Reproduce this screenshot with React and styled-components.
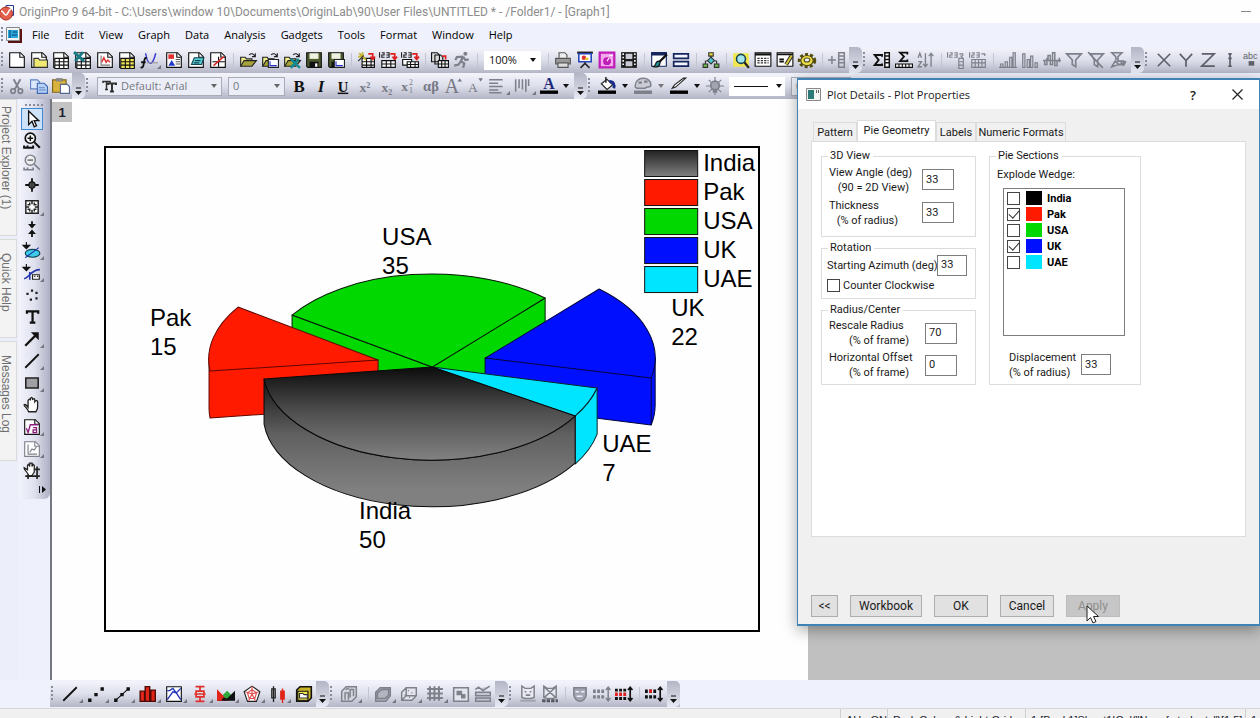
import React from "react";
import styled, { createGlobalStyle, css } from "styled-components";

const uiFont = `"Open Sans", "Noto Sans", sans-serif`;
const dialogFont = `Roboto, "Liberation Sans", Arial, sans-serif`;
const plainFont = `"Liberation Sans", Arial, sans-serif`;

const GlobalStyle = createGlobalStyle`
  * { box-sizing: border-box; }
  body { margin: 0; background: #eef0fb; font-family: ${uiFont}; color: #1c1c2c; overflow: hidden; }
  button, input, select { font: inherit; color: inherit; margin: 0; }
  svg { display: block; flex: none; }
`;

const Shell = styled.div`
  position: relative;
  display: flex;
  flex-direction: column;
  height: 100vh;
  overflow: hidden;
`;

const TitleBar = styled.header`
  display: flex;
  align-items: center;
  flex: none;
  height: 23px;
  gap: 5px;
  background: #fefefe;
  color: #8c8c8c;
`;

const TitleText = styled.h1`
  flex: 1;
  margin: 0;
  font-family: ${dialogFont};
  font-size: 12px;
  line-height: 22px;
  font-weight: 400;
  white-space: nowrap;
`;

const MinimiseButton = styled.button`
  display: flex;
  align-items: center;
  justify-content: center;
  width: 28px;
  height: 22px;
  border: 0;
  padding: 0;
  background: none;
`;

const MenuBar = styled.nav`
  display: flex;
  align-items: center;
  flex: none;
  height: 24px;
  background: #eff1fc;
`;

const MenuList = styled.div`
  display: flex;
  gap: 15px;
  padding-left: 10px;
`;

const MenuItem = styled.button`
  border: 0;
  padding: 0;
  background: none;
  font-size: 11px;
  line-height: 22px;
  color: #000;
`;

const ToolRow = styled.div`
  display: flex;
  flex: none;
  height: 26px;
  white-space: nowrap;
  background: linear-gradient(#edf0fa, #e6e8f4 40%, #b6b8ca 88%, #9a9cae);
  overflow: hidden;
`;

const BottomRow = styled.div`
  display: flex;
  flex: none;
  height: 28px;
  padding: 1px 0 1px 50px;
  background: #eff1fc;
  overflow: hidden;
`;

const Bar = styled.div`
  display: flex;
  align-items: center;
  flex: none;
  background: linear-gradient(#f3f4fb, #dddfeb 50%, #b4b6c7);
`;

const Grip = styled.span`
  flex: none;
  width: ${(p) => (p.$narrow ? 6 : 9)}px;
  height: 16px;
  background: radial-gradient(circle at 1px 1px, #8a8c9c 1px, transparent 1px) 1px 0 / 9px 4px repeat-y;
`;

const VGrip = styled.span`
  flex: none;
  height: 7px;
  width: 20px;
  margin-left: 4px;
  background: radial-gradient(circle at 1px 1px, #8a8c9c 1px, transparent 1px) 0 3px / 4px 8px repeat-x;
`;

const ToolButton = styled.button`
  position: relative;
  display: flex;
  align-items: center;
  flex: none;
  width: ${(p) => p.$w || 22}px;
  height: 22px;
  padding: 0 0 0 2px;
  border: 1px solid transparent;
  border-left-width: 0;
  background: none;
  ${(p) =>
    p.$mark &&
    css`
      &::after {
        content: "";
        position: absolute;
        right: 1px;
        bottom: 1px;
        border: 2px solid #74757f;
        border-top-color: transparent;
        border-left-color: transparent;
      }
    `}
  ${(p) =>
    p.$active &&
    css`
      border: 1px solid #3c8ad8;
      padding-left: 1px;
      background: #cfe3f8;
    `}
`;

const Separator = styled.span`
  flex: none;
  width: 8px;
  height: 18px;
  background: linear-gradient(#c3c5d3, #c3c5d3) 4px 2px / 1px 14px no-repeat;
`;

const Overflow = styled.button`
  display: flex;
  align-items: flex-end;
  justify-content: center;
  flex: none;
  align-self: stretch;
  width: 13px;
  margin-left: ${(p) => p.$gap || 0}px;
  padding: 0 0 4px;
  border: 0;
  border-radius: 0 5px 5px 0;
  background: linear-gradient(#b4b6c6, #d0d2df 60%, #e8eaf5);
`;

const Caret = styled.span`
  flex: none;
  width: 0;
  border: 3px solid transparent;
  border-bottom: 0;
  border-top: 4px solid ${(p) => p.$color || "#111"};
  margin: 0 ${(p) => p.$space || 0}px;
`;

const Combo = styled.button`
  display: flex;
  align-items: center;
  flex: none;
  width: ${(p) => p.$w}px;
  height: 19px;
  margin: 0 3px;
  padding: 0 4px;
  gap: 4px;
  border: 1px solid ${(p) => (p.$dim ? "#a9abb8" : "#fff")};
  background: ${(p) => (p.$dim ? "#eceef7" : "#fff")};
  color: ${(p) => (p.$dim ? "#77787f" : "#111")};
  font-size: 11px;
  line-height: 16px;
`;

const ComboText = styled.span`
  flex: 1;
  text-align: left;
`;

const Workspace = styled.main`
  display: flex;
  flex: 1;
  min-height: 0;
`;

const SideTabs = styled.aside`
  display: flex;
  flex-direction: column;
  gap: 3px;
  flex: none;
  width: 19px;
  background: #eceefa;
`;

const SideTab = styled.button`
  width: 17px;
  height: ${(p) => p.$h}px;
  padding: ${(p) => p.$pad}px 5px 0 0;
  border: 1px solid #dadada;
  border-left: 0;
  background: #f3f3f4;
  color: #6f6f6f;
  font-family: ${plainFont};
  font-size: 12px;
  line-height: 11px;
  writing-mode: vertical-rl;
  text-align: start;
  white-space: nowrap;
`;

const Tools = styled.div`
  display: flex;
  flex-direction: column;
  flex: none;
  align-self: flex-start;
  width: 31px;
  padding: 2px 0 3px 2px;
  border-radius: 0 0 6px 0;
  background: linear-gradient(90deg, #f2f3fb, #dfe1ee 50%, #aeb0c4);
`;

const ToolsEnd = styled.button`
  display: flex;
  justify-content: flex-end;
  align-items: center;
  height: 14px;
  border: 0;
  padding: 0 4px;
  background: none;
`;

const Desktop = styled.section`
  display: flex;
  flex: 1;
  min-width: 0;
  border-left: 2px solid #77787f;
  background: #c0c0c0;
`;

const GraphWindow = styled.div`
  display: flex;
  flex-direction: column;
  width: 62.6%;
  background: #fefefe;
`;

const LayerTag = styled.button`
  width: 20px;
  height: 20px;
  margin-top: 3px;
  border: 0;
  padding: 0;
  background: #c3c3c3;
  font-family: ${plainFont};
  font-size: 13px;
  font-weight: 700;
`;

const Frame = styled.div`
  margin: 24px 48px 0 52px;
  border: 2px solid #000;
  svg { width: 100%; }
`;

const Dialog = styled.section`
  position: absolute;
  top: 78px;
  left: 797px;
  width: 463px;
  display: flex;
  flex-direction: column;
  border: 1px solid #3f82b6;
  border-top-width: 2px;
  border-bottom-width: 2px;
  background: #f0f0f0;
  box-shadow: 0 4px 14px rgba(0, 0, 0, 0.35);
  font-family: ${dialogFont};
  font-size: 11px;
  color: #1a1a1a;
`;

const DialogTitle = styled.header`
  display: flex;
  align-items: center;
  height: 29px;
  padding-left: 8px;
  background: #fff;
  font-family: ${uiFont};
`;

const DialogName = styled.h2`
  flex: 1;
  margin: 0 0 0 6px;
  font-size: 11px;
  font-weight: 400;
`;

const CaptionButton = styled.button`
  display: flex;
  align-items: center;
  justify-content: center;
  width: 44px;
  height: 28px;
  border: 0;
  padding: 0;
  background: none;
  font-size: 13px;
  font-weight: 600;
`;

const TabList = styled.div`
  display: flex;
  align-items: flex-end;
  height: 32px;
  padding-left: 15px;
`;

const Tab = styled.button`
  height: ${(p) => (p.$on ? 22 : 19)}px;
  width: ${(p) => p.$w}px;
  padding: 0 0 ${(p) => (p.$on ? 3 : 0)}px;
  margin-bottom: ${(p) => (p.$on ? -1 : 0)}px;
  border: 1px solid #dcdcdc;
  border-bottom: 0;
  background: ${(p) => (p.$on ? "#fff" : "#f0f0f0")};
  white-space: nowrap;
`;

const TabPage = styled.div`
  display: flex;
  align-items: flex-start;
  gap: 13px;
  height: 396px;
  margin: 0 13px;
  padding: 7px 9px;
  border: 1px solid #dcdcdc;
  background: #fff;
`;

const Column = styled.div`
  display: flex;
  flex-direction: column;
  gap: 4px;
`;

const Group = styled.fieldset`
  width: ${(p) => p.$w}px;
  min-width: 0;
  height: ${(p) => p.$h}px;
  margin: 0;
  padding: 0 0 0 5px;
  border: 1px solid #dcdcdc;
`;

const Legend = styled.legend`
  margin-left: 1px;
  padding: 0 3px 0 2px;
  line-height: 14px;
`;

const Field = styled.label`
  display: flex;
  align-items: center;
  gap: ${(p) => p.$gap ?? 13}px;
  height: ${(p) => p.$h ?? 33}px;
  padding-left: ${(p) => p.$indent ?? 2}px;
  line-height: 15px;
  white-space: nowrap;
`;

const FieldText = styled.span`
  width: ${(p) => p.$w}px;
`;

const Second = styled.span`
  display: block;
  text-align: ${(p) => p.$align || "right"};
  padding-right: ${(p) => p.$inset || 0}px;
`;

const NumberInput = styled.input`
  width: ${(p) => p.$w || 32}px;
  height: 21px;
  padding: 0 0 1px 3px;
  border: 1px solid #7d7d7d;
  border-radius: 0;
  background: #fff;
`;

const CheckBox = styled.input`
  appearance: none;
  flex: none;
  width: 13px;
  height: 13px;
  border: 1px solid #444;
  background: #fff;
  &:checked::before {
    content: "";
    display: block;
    width: 9px;
    height: 5px;
    margin: 1px 0 0 1px;
    border: solid #333;
    border-width: 0 0 1px 1px;
    transform: rotate(-48deg);
  }
`;

const CheckLabel = styled.label`
  display: flex;
  align-items: center;
  gap: 3px;
  height: 13px;
  margin-top: 4px;
  white-space: nowrap;
`;

const ListCaption = styled.div`
  padding: 4px 0 6px 2px;
  line-height: 15px;
`;

const WedgeList = styled.div`
  width: 122px;
  height: 148px;
  margin: 0 0 12px 8px;
  padding: 1px 3px;
  border: 1px solid #7d7d7d;
`;

const WedgeRow = styled.label`
  display: flex;
  align-items: center;
  height: 16px;
  gap: 6px;
  font-weight: 700;
  color: #000;
`;

const Swatch = styled.span`
  width: 16px;
  height: 14px;
  margin-right: -1px;
  background: ${(p) => p.$color};
`;

const DialogButtons = styled.footer`
  display: flex;
  gap: 12px;
  padding: 58px 13px 7px;
`;

const PushButton = styled.button`
  width: ${(p) => p.$w || 54}px;
  height: 22px;
  padding: 0;
  border: 1px solid #adadad;
  background: #e1e1e1;
  font-size: 12px;
  &:disabled { background: #c6c6c6; border-color: #bdbdbd; color: #8e8e8e; }
`;

const Cursor = styled.svg`
  position: absolute;
  left: 288px;
  top: 525px;
`;

const StatusBar = styled.footer`
  display: flex;
  justify-content: flex-end;
  flex: none;
  height: 10px;
  border-top: 1px solid #d7d7d7;
  background: #f0f0f0;
  font-family: ${plainFont};
  font-size: 11px;
  line-height: 14px;
  overflow: hidden;
  white-space: nowrap;
`;

const StatusCell = styled.span`
  flex: none;
  width: ${(p) => p.$w}px;
  height: 20px;
  padding: 4px 0 0 5px;
  border-left: 1px solid #d0d0d0;
  overflow: hidden;
`;

const G = "#7e808a";
const page = "M1.500 1.500h9.500l3.500 3.500v9.500h-13z";
const Page = ({ children, edge = "#111" }) => (
  <>
    <path d={page} fill="#fff" stroke={edge} />
    <path d="M10.500 1.500v4h4" fill="none" stroke={edge} />
    {children}
  </>
);
const Grid = ({ x = 2, y = 6, w = 12, h = 9, fill = "#fff", c = "#111" }) => (
  <path
    d={`M${x}.5 ${y}.5h${w}v${h}h-${w}zM${x}.5 ${y + 3}.5h${w}M${x}.5 ${y + 6}.5h${w}M${x + 4}.5 ${y}.5v${h}M${x + 8}.5 ${y}.5v${h}`}
    fill={fill}
    stroke={c}
  />
);
const Folder = () => (
  <>
    <path d="M1.500 13.500v-8h4l1 1.500h5v2" fill="#f2ee8a" stroke="#222" />
    <path d="M1.500 13.500l3-5h11l-4 5z" fill="#a8a23a" stroke="#222" />
    <path d="M9 3.500c2-2 4-1 5 1M14.500 2v3h-3" fill="none" stroke="#222" />
  </>
);
const Floppy = () => (
  <>
    <path d="M1.500 1.500h13v13h-12l-1-1z" fill="#4c5a2c" stroke="#111" />
    <path d="M4 2h8v5h-8z" fill="#eef0e0" />
    <path d="M4 9.500h8v5h-8z" fill="#111" />
    <path d="M9 11h2v3h-2z" fill="#fff" />
  </>
);
const Digits = ({ c = "#222" }) => (
  <path d="M.500 1v5M2.500 1.500h2v2h-2v2h2.500M6.500 1.500h2.500v4h-2.500M6.500 3.500h2" stroke={c} fill="none" />
);
const RedArrow = ({ c = "#e02020" }) => (
  <path d="M10 2.500h4v4M12 5l2 2.500L16 5" fill="none" stroke={c} strokeWidth="1.500" />
);

const art = {
  newDoc: <Page />,
  newFolder: (
    <Page>
      <path d="M3.500 14.500v-8h4l1 1.500h7v6.500z" fill="#efe873" stroke="#333" />
    </Page>
  ),
  newBook: <Page><Grid /></Page>,
  newExcel: (
    <Page>
      <Grid />
      <path d="M0 1l9 8M8 1L1 9" stroke="#1a7a86" strokeWidth="2.500" />
    </Page>
  ),
  newGraph: (
    <Page>
      <path d="M4.500 4v8.500h8" fill="none" stroke="#777" />
      <path d="M5 10l2-4 2 4 1.500-2 2 2" fill="none" stroke="#d33" strokeWidth="1.300" />
    </Page>
  ),
  newMatrix: <Page><Grid fill="#efe35a" /></Page>,
  newFn: (
    <>
      <path d="M5 2c2 12 6 12 9 0" fill="none" stroke="#3a3ad0" strokeWidth="1.300" />
      <path d="M6 6.500c-2-1-2 1-2.500 4s-1 5-3 4M1 10h4" fill="none" stroke="#111" strokeWidth="1.600" />
      <path d="M6 10.500h10" stroke="#999" />
    </>
  ),
  newLayout: (
    <Page>
      <path d="M3 3h5v4H3z" fill="#e03030" />
      <path d="M3 13l3-5 3 5z" fill="#2038c8" />
      <path d="M9.500 7.500h4M9.500 9.500h4M9.500 11.500h4" stroke="#555" />
    </Page>
  ),
  newNotes: (
    <Page>
      <path d="M4 12l2.500-6H15l-2 6z" fill="#58cfd0" stroke="#145" />
      <path d="M7 8.500h5M6 10.500h5" stroke="#145" />
    </Page>
  ),
  newScript: (
    <Page>
      <path d="M3 9.500h11M8.500 5v9" stroke="#111" />
      <path d="M4 13l9-8" stroke="#e02020" strokeWidth="1.300" />
    </Page>
  ),
  open: <Folder />,
  openTpl: (
    <>
      <Folder />
      <path d="M6.500 7.500h9v7h-9z" fill="#fff" stroke="#222" />
      <path d="M8 9v4h6" fill="none" stroke="#2233cc" />
    </>
  ),
  openXl: (
    <>
      <Folder />
      <path d="M7 7l8 8M14 7l-7 8" stroke="#128a96" strokeWidth="2.200" />
    </>
  ),
  save: <Floppy />,
  saveTpl: (
    <>
      <Floppy />
      <path d="M6.500 7.500h9v7h-9z" fill="#fff" stroke="#222" />
      <path d="M8 9v4h6" fill="none" stroke="#2233cc" />
    </>
  ),
  wizard: (
    <>
      <Grid x={4} y={6} w={11} h={8} />
      <path d="M2 2l6 6M5 1v3M1 5h3" stroke="#c9b42a" strokeWidth="1.600" />
      <path d="M1 9l5-5" stroke="#333" />
      <RedArrow />
    </>
  ),
  ascii: (
    <>
      <Digits />
      <RedArrow />
      <path d="M2.500 8.500h12v6h-12zM2.500 11.500h12M6.500 8.500v6M10.500 8.500v6" fill="#fff" stroke="#111" />
    </>
  ),
  asciiMulti: (
    <>
      <Digits />
      <RedArrow />
      <path d="M1.500 7.500h8v5h-8z" fill="#fff" stroke="#111" />
      <path d="M5.500 9.500h10v5h-10zM5.500 12h10M8.500 9.500v5M12.500 9.500v5" fill="#fff" stroke="#111" />
    </>
  ),
  batch: (
    <>
      <path d="M.500 1.500h5l2 2v6h-7zM3.500 3.500h5l2 2v6h-7z" fill="#ddd" stroke="#111" />
      <path d="M6.500 8.500h9v6h-9zM6.500 11.500h9M9.500 8.500v6M12.500 8.500v6" fill="#fff" stroke="#111" />
      <path d="M10 4.500h3v3" fill="none" stroke="#e02020" strokeWidth="1.500" />
    </>
  ),
  runner: (
    <>
      <circle cx="11" cy="2.500" r="1.800" fill={G} />
      <path d="M9 5L3.500 5.500 2 8M9 5l2 3 3-.500M9 5L7 9l3 2-1 4M7 9l-2 3-4 1" fill="none" stroke={G} strokeWidth="2" />
    </>
  ),
  print: (
    <>
      <path d="M4.500 6V1.500h5l2 2V6" fill="#eee" stroke="#555" />
      <path d="M1.500 6.500h13v5h-13z" fill="#999" stroke="#555" />
      <path d="M3.500 10.500h9v4h-9z" fill="#ddd" stroke="#555" />
    </>
  ),
  slides: (
    <>
      <path d="M1 1.500h14" stroke="#222" strokeWidth="2" />
      <path d="M2.500 2.500h11v7h-11z" fill="#fff" stroke="#24b" strokeWidth="1.400" />
      <circle cx="7" cy="6" r="2" fill="#d33" />
      <path d="M8 6h3v2H8z" fill="#e8c030" />
      <path d="M8 10v2M4 15l4-4 4 4" fill="none" stroke="#222" strokeWidth="1.300" />
    </>
  ),
  pinkBox: (
    <>
      <path d="M1.500 1.500h13v13h-13z" fill="#f3a8ee" stroke="#c01cb8" strokeWidth="2" />
      <circle cx="8" cy="9" r="3.500" fill="#c01cb8" />
      <path d="M8 9l2-3M10 4h3" stroke="#fff" />
    </>
  ),
  film: (
    <>
      <path d="M1 1h14v14H1z" fill="#1b1b1b" />
      <path d="M5 2.500h6v4.500H5zM5 9h6v4.500H5z" fill="#c9ccd6" />
      <path d="M2.800 2v12M13.200 2v12" stroke="#fff" strokeWidth="1.400" strokeDasharray="1.500 1.500" />
    </>
  ),
  brushWin: (
    <>
      <path d="M1.500 1.500h13v12h-13z" fill="#fff" stroke="#14245c" />
      <path d="M1 2.500h14" stroke="#14245c" strokeWidth="3" />
      <path d="M15 3l-7 7" stroke="#111" strokeWidth="2" />
      <path d="M8 9c-4 0-2 4-5 5 4 1 6-1 6-4z" fill="#1c8c96" stroke="#111" />
    </>
  ),
  panes: <path d="M1.500 2.500h13v4h-13zM1.500 9.500h13v4h-13z" fill="#f2f4ff" stroke="#14245c" strokeWidth="1.500" />,
  tree: (
    <>
      <path d="M8 4v4M3 12V9l5-1 5 1v3" stroke="#333" fill="none" />
      <path d="M6 1.500h4v3H6z" fill="#e8d83a" stroke="#333" />
      <path d="M8 5.500l3 3-3 3-3-3z" fill="#4cc7d6" stroke="#333" />
      <path d="M1 11.500h4v3H1zM11 11.500h4v3h-4z" fill="#6ac04a" stroke="#333" />
    </>
  ),
  finder: (
    <>
      <path d="M1 2h14v12H1z" fill="#f1e650" />
      <circle cx="8" cy="7" r="4" fill="#a5e6ee" stroke="#145" strokeWidth="1.400" />
      <path d="M11 10l4 5" stroke="#222" strokeWidth="2" />
    </>
  ),
  results: (
    <>
      <path d="M1 1.500h14v12H1z" fill="#fff" stroke="#111" />
      <path d="M1 3h14" stroke="#111" strokeWidth="2" />
      <path d="M3 6.500h10M3 8.500h10M3 10.500h10" stroke="#333" strokeDasharray="2 1" />
    </>
  ),
  command: (
    <>
      <path d="M1 1.500h14v12H1z" fill="#fff" stroke="#111" />
      <path d="M1 3h14M3 7.500h4M3 9.500h4" stroke="#111" strokeWidth="1.500" />
      <path d="M14 4l-5 8" stroke="#222" strokeWidth="3.500" />
      <path d="M14 4l-5 8" stroke="#d6c83c" strokeWidth="1.800" />
    </>
  ),
  gear: (
    <>
      <ellipse cx="8" cy="8.500" rx="6.500" ry="5" fill="none" stroke="#554c10" strokeWidth="3.500" strokeDasharray="2.500 1.700" />
      <ellipse cx="8" cy="8.500" rx="5.500" ry="4.500" fill="#ecdf4a" stroke="#554c10" />
      <ellipse cx="8" cy="8" rx="2.500" ry="1.800" fill="#eef" stroke="#554c10" />
    </>
  ),
  addCol: <path d="M0 8h7M3.500 4.500v7M9.500 1.500h5v13h-5zM9.500 4.500h5M9.500 7.500h5M9.500 10.500h5" fill="none" stroke={G} strokeWidth="1.300" />,
  sumCol: (
    <>
      <path d="M8 5V3.500H1.500L5 8l-3.500 4.500H8V11" fill="none" stroke="#111" strokeWidth="1.700" />
      <path d="M10.500 1.500h4v13h-4zM10.500 4.500h4M10.500 7.500h4M10.500 10.500h4" fill="#fff" stroke="#111" strokeWidth="1.300" />
    </>
  ),
  sumRow: (
    <>
      <path d="M11 3V1.500H4.500L8 5l-3.500 4H11V7.500" fill="none" stroke="#111" strokeWidth="1.600" />
      <path d="M.5 11.500h15v3H.5zM3.500 11.500v3M6.500 11.500v3M9.500 11.500v3M12.500 11.500v3" fill="#fff" stroke="#111" />
    </>
  ),
  sort: <path d="M1 6l1.500-4L4 6M1 9.500h3L1 14h3.500M7.500 2v12M5.500 11.500l2 2.500 2-2.500M12.500 14V2M10.500 4.500l2-2.500 2 2.500" fill="none" stroke={G} strokeWidth="1.200" />,
  setCol: (
    <>
      <Digits c={G} />
      <path d="M11 2.500h3v2M12 4l2 2" stroke={G} fill="none" />
      <path d="M10.500 6.500h4v9h-4zM10.500 9.500h4M10.500 12.500h4" fill="none" stroke={G} />
    </>
  ),
  setRow: (
    <>
      <Digits c={G} />
      <path d="M11 2.500h3v2" stroke={G} fill="none" />
      <path d="M2.500 7.500h12v7h-12zM2.500 10.500h12M5.500 7.500v7M8.500 7.500v7M11.500 7.500v7" fill="none" stroke={G} />
    </>
  ),
  barsUp: <path d="M1.500 14.500v-3h2v3zM5.500 14.500v-5h2v5zM9.500 14.500v-9h2v9zM12.500 14.500v-13h2v13zM0 14.500h16" fill="#ccd" stroke={G} />,
  barsMix: <path d="M1.500 14.500v-12h2v12zM5.500 14.500v-7h2v7zM8.500 14.500v-10h2v10zM12.500 14.500v-4h2v4z" fill="#ccd" stroke={G} />,
  barsAxis: <path d="M0 8.500h16M1.500 8v4h2V6M4.500 8V4h2v8h2V1.500h2V13h2V8M14.500 6v4" fill="none" stroke={G} strokeWidth="1.300" />,
  funnel: <path d="M1.500 2.500h13L9.500 8v6l-3-2V8z" fill="#dde" stroke={G} strokeWidth="1.500" />,
  funnelOff: <path d="M3.500 2.500h11L9.500 8v6l-3-2V8zM1 1l13 14" fill="#dde" stroke={G} strokeWidth="1.500" />,
  funnelRe: (
    <>
      <path d="M2.500 1.500h9L8 5v3L6 7V5zM2.500 14l3-5 3 3z" fill="#dde" stroke={G} strokeWidth="1.400" />
      <path d="M7 9h6v3M15 9l-2 3.500L10.500 10M8 12h4" fill="none" stroke={G} strokeWidth="1.600" />
    </>
  ),
  axX: <path d="M2.500 2.500l11 11M13.500 2.500l-11 11" stroke="#5d5f69" strokeWidth="1.400" />,
  axY: <path d="M2.500 2.500L8 8.500l5.500-6M8 8v6" fill="none" stroke="#5d5f69" strokeWidth="1.500" />,
  axZ: <path d="M2.500 2.500h11l-11 11h11.500" fill="none" stroke="#5d5f69" strokeWidth="1.500" />,
  axErr: <path d="M8 3v10M6.500 2.500h3M6.500 13.500h3M6.500 6.500h3" fill="none" stroke="#5d5f69" strokeWidth="1.500" />,
  axLbl: (
    <>
      <text x="0" y="7" fontSize="8" fill="#5d5f69" fontFamily="Liberation Sans, sans-serif">abc</text>
      <path d="M5 9h5v4H5z" fill="#5d5f69" />
    </>
  ),
  cut: (
    <>
      <path d="M5 2l5 9M11 2L6 11" stroke={G} strokeWidth="1.700" />
      <circle cx="4.500" cy="12.500" r="2" fill="none" stroke={G} strokeWidth="1.500" />
      <circle cx="11" cy="12.500" r="2" fill="none" stroke={G} strokeWidth="1.500" />
    </>
  ),
  copy: (
    <>
      <path d="M.500 2.500h6l2 2v6h-8z" fill="#dbe8fb" stroke="#5f83c4" />
      <path d="M6.500 5.500h6l3 3v6h-9z" fill="#b5d0f5" stroke="#3f68b4" />
      <path d="M8 9.500h5M8 11.500h6" stroke="#5f83c4" />
    </>
  ),
  paste: (
    <>
      <path d="M.500 2.500h12v11h-12z" fill="#d9b23c" stroke="#7d6420" />
      <path d="M3.500 1h6v3h-6z" fill="#888" />
      <path d="M7.500 6.500h6l2 2v6h-8z" fill="#fff" stroke="#56698c" />
    </>
  ),
  alignL: <path d="M1 2.500h12M1 5.500h8M1 8.500h12M1 11.500h8M1 14h11" stroke={G} strokeWidth="1.300" />,
  pattern: <path d="M1.500 2v11M4.500 2v8M7.500 2v9M10.500 2v11M13 2v6" stroke={G} strokeWidth="1.400" />,
  bucket: (
    <>
      <path d="M3 6l5-4 5 5-5 4z" fill="#fff" stroke="#222" />
      <path d="M7 0v5" fill="none" stroke="#222" strokeWidth="1.300" />
      <path d="M10 4c4 0 5 3 4 6" fill="none" stroke="#1a2c8c" strokeWidth="2.500" />
      <path d="M0 12h16v3H0z" fill="#000" />
    </>
  ),
  palette: (
    <>
      <path d="M1 8c0-9 14-9 14-1 0 3-4 1-5 3H4C2 10 1 9 1 8z" fill="#c9cad4" stroke={G} strokeWidth="1.300" />
      <path d="M4 4h3v2H4zM9 3h3v2H9zM0 12h16v3H0z" fill={G} />
    </>
  ),
  pen: (
    <>
      <path d="M2 10l3-1 9-8-2 0-8 6z" fill="#fff" stroke="#222" />
      <path d="M0 12h16v3H0z" fill="#000" />
    </>
  ),
  bulb: (
    <>
      <path d="M8 0v16M0 8h16M2.500 2.500l11 11M13.500 2.500l-11 11" stroke={G} />
      <circle cx="8" cy="7.500" r="3.800" fill="#a3a5b0" stroke={G} strokeWidth="1.500" />
      <path d="M6 11h4v3H6z" fill={G} />
    </>
  ),
  pointer: <path d="M5 1v12l3-3 2 5 2-1-2-4.500h4z" fill="#fff" stroke="#111" strokeWidth="1.200" />,
  zoomIn: (
    <>
      <circle cx="6.500" cy="5.500" r="4.500" fill="#fff" stroke="#111" strokeWidth="1.500" />
      <path d="M4 5.500h5M6.500 3v5" stroke="#111" strokeWidth="1.400" />
      <path d="M10 9l5 5M1 12v2h8v-2M4 12v2" fill="none" stroke="#111" strokeWidth="1.800" />
    </>
  ),
  zoomOut: (
    <>
      <circle cx="6.500" cy="5.500" r="4.500" fill="#eee" stroke={G} strokeWidth="1.300" />
      <path d="M4 5.500h5M10 9l5 5M1 12v2h8v-2M4 12v2" fill="none" stroke={G} strokeWidth="1.500" />
    </>
  ),
  reader: (
    <>
      <path d="M8 2v12M2 8h12" stroke="#111" strokeWidth="1.600" />
      <circle cx="8" cy="8" r="2.800" fill="#444" stroke="#111" />
    </>
  ),
  target: <path d="M2.500 2.500h11v11h-11zM8 2.500v3M8 10.500v3M2.500 8h3M10.500 8h3M6 4v2H4M10 4v2h2M6 12v-2H4M10 12v-2h2" fill="#fff" stroke="#222" strokeWidth="1.300" />,
  compress: (
    <>
      <path d="M8 1v3M8 12v3" stroke="#111" strokeWidth="1.600" />
      <path d="M4.500 3.500h7L8 7.500zM4.500 12.500h7L8 8.500z" fill="#111" />
    </>
  ),
  region: (
    <>
      <path d="M3 0v4M0 3h6L3 6z" stroke="#111" fill="#111" />
      <ellipse cx="8.500" cy="10" rx="6.500" ry="3.500" fill="#3ccbe8" stroke="#145" />
      <path d="M2 14L14 5" stroke="#2233aa" />
    </>
  ),
  maskTool: (
    <>
      <path d="M3 0v4M0 3h6L3 6z" stroke="#111" fill="#111" />
      <path d="M1 13c4 0 6-8 14-8M6 14V7" stroke="#2233aa" fill="none" strokeWidth="1.400" />
      <path d="M8.500 9.500h6v4h-6z" fill="#fff" stroke="#222" />
      <path d="M10 11h1M12.500 11h1" stroke="#111" />
    </>
  ),
  dots: <path d="M3 6h2v2H3zM7 3h2v2H7zM6 11h2v2H6zM11 5h2v2h-2zM11 10h2v2h-2z" fill="#222" />,
  text: <path d="M3.500 5V3h10v2M8.500 3v10M6 13h5" fill="none" stroke="#111" strokeWidth="2" />,
  arrow: (
    <>
      <path d="M2 14L11 5" stroke="#111" strokeWidth="2" />
      <path d="M14 2v7L7 2z" fill="#111" />
    </>
  ),
  line: <path d="M2 14L14 2" stroke="#111" strokeWidth="1.600" />,
  rect: <path d="M2.500 3.500h11v9h-11z" fill="#a0a0a4" stroke="#222" strokeWidth="1.400" />,
  hand: <path d="M5 14c-1-3-3-4-4-6 1-1 2 0 3.500 2V4c1-2 2-1 2 0V2.500c1-2 2-1 2 0v1c1-2 2-1 2 0v1.500c1-1.500 2.500-1 2.500 0V9.500c0 3-1 3-1.500 4.500z" fill="#fff" stroke="#222" strokeWidth="1.200" />,
  equation: (
    <Page>
      <path d="M3 9l1.500 4 2-7h7M9 8.500h3v4.500H9V10.500h3" fill="none" stroke="#8c1c7c" strokeWidth="1.200" />
    </Page>
  ),
  graphPage: (
    <Page edge={G}>
      <path d="M4.500 4v8.500h8M6 11l2-3 2 1 2-3" fill="none" stroke={G} />
    </Page>
  ),
  handGrid: (
    <>
      <path d="M4 10c-2-3-3-3-3-5l3 2V3l1-1 1 2V1h2v3l1-2 1 1v6l-2 3H5z" fill="#fff" stroke="#222" strokeWidth="1.100" />
      <path d="M2 12.500h13M12.500 4v11M4.500 11v4M10 6.500h5" stroke="#222" strokeWidth="1.500" />
    </>
  ),
  scatter: <path d="M1 12h3v3H1zM6.500 7h3v3h-3zM12 2h3v3h-3z" fill="#111" />,
  lineSym: (
    <>
      <path d="M3 13L14 3" stroke="#111" />
      <path d="M1 12h3v3H1zM6.500 7h3v3h-3zM12 2h3v3h-3z" fill="#111" />
    </>
  ),
  column: <path d="M1 14.500v-9h4v9zM5.500 14.500v-13h4v13zM10.500 14.500v-10h4v10z" fill="#e02418" stroke="#4c0a06" strokeWidth="1.200" />,
  multiLine: (
    <>
      <path d="M1.500 1.500h13v13h-13z" fill="#fff" stroke="#111" />
      <path d="M2 5h2l3-2 3 4 4-4M2 13l5-7 3 1 4 6" fill="none" stroke="#2233bb" strokeWidth="1.200" />
    </>
  ),
  box: <path d="M4 1.500h8M8 1.500v4M4.500 5.500h7v5h-7zM3 8h10M8 10.500v4M4 14.500h8" fill="none" stroke="#e0302c" strokeWidth="1.500" />,
  area: (
    <>
      <path d="M0 14V4l5 5 6 5z" fill="#e02418" />
      <path d="M5 9l4-4 4 4-4 4z" fill="#2fa83a" />
      <path d="M0 14l6-3 3 1 7-7v9z" fill="#111" />
      <path d="M0 4l6 6-2 4H0z" fill="#e02418" />
    </>
  ),
  radar: (
    <>
      <path d="M8 1l7 5-3 8.500H4L1 6z" fill="#fff" stroke="#222" />
      <path d="M8 4l4 3-1.500 5h-5L4 7zM8 1v7l6-2M8 8l-6-2M8 8l3 6M8 8l-3 6" fill="none" stroke="#e05050" />
    </>
  ),
  candle: (
    <>
      <path d="M4 1v14M2.500 3.500h3v8h-3z" fill="#fff" stroke="#222" strokeWidth="1.200" />
      <path d="M12 3v13M10.500 5.500h3v7h-3z" fill="#e02418" stroke="#e02418" strokeWidth="1.200" />
    </>
  ),
  templates: (
    <>
      <path d="M4.500 1.500h10v10l-3 3h-10v-10z" fill="#c9b42a" stroke="#111" strokeWidth="1.400" />
      <path d="M2.500 5.500h9v8h-9z" fill="#f1e650" stroke="#111" />
      <path d="M4 7.500h3l1 1h3v3H4z" fill="#fff" stroke="#333" />
    </>
  ),
  cubeBars: <path d="M1.500 5.500l4-4h9v9l-4 4h-9zM4.500 13V7h3v6M9 11V4h3v6M5 4l3-1" fill="#d5d6e0" stroke={G} strokeWidth="1.300" />,
  cube: <path d="M1.500 6.500l4-4h9v7l-4 5h-9zM3 7l4-3h6v5l-3 3H3z" fill="#b2b4c0" stroke={G} strokeWidth="1.300" />,
  cubeDots: <path d="M1.500 6.500l4-4h9v7l-4 4h-9zM5.500 2.500v7l-4 4M5.500 9.500h9M7 5h1M10 7h1M4 9h1M8 11h1" fill="#e3e4ee" stroke={G} strokeWidth="1.300" />,
  mesh: <path d="M1 3.500h14M1 7.500h14M1 11.500h14M3.500 1v13M7.500 1v13M11.500 1v13" stroke={G} strokeWidth="1.800" />,
  contour: (
    <>
      <path d="M1.500 2.500h13v12h-13z" fill="#e3e4ee" stroke={G} strokeWidth="1.400" />
      <path d="M4 5h5v4H4zM8 8h4v4H8z" fill={G} />
    </>
  ),
  stack: <path d="M1 4l3-2 4 3 6-4M1.500 6.500h13v3h-13zM1.500 11.500h13v3h-13z" fill="#c2c4d0" stroke={G} strokeWidth="1.300" />,
  cat: (
    <>
      <path d="M2.500 11V1l3 2h5l3-2v10l-3 1h-5z" fill="#e8e9f2" stroke={G} strokeWidth="1.300" />
      <path d="M5 6h1.500M9.500 6H11M6 9h4" stroke={G} strokeWidth="1.500" />
      <path d="M1 14h14" stroke="#a5a6b0" strokeWidth="2" />
    </>
  ),
  catX: (
    <>
      <path d="M2.500 11V1l3 2h5l3-2v10l-3 1h-5zM3 2l10 9M13 2L3 11" fill="#e8e9f2" stroke={G} strokeWidth="1.300" />
      <path d="M1 14h14" stroke="#55565f" strokeWidth="2.500" strokeDasharray="3 1" />
    </>
  ),
  mask: (
    <>
      <path d="M2.500 2.500h11v6c0 3-3 6-5.500 6s-5.500-3-5.500-6z" fill="#a3a5b0" stroke={G} strokeWidth="1.300" />
      <path d="M4 6h3M9 6h3M5 10h5" stroke="#eef" strokeWidth="1.400" />
    </>
  ),
  swapG: (
    <>
      <path d="M0 5.500h10M0 10.500h10" stroke={G} strokeWidth="3" strokeDasharray="2.500 1.200" />
      <path d="M13.500 2v12M11.500 4.500l2-2.500 2 2.500M11.500 11.500l2 2.500 2-2.500" fill="none" stroke={G} strokeWidth="1.300" />
    </>
  ),
  swapR: (
    <>
      <path d="M0 4.500h10M0 12h10" stroke="#111" strokeWidth="2.500" strokeDasharray="2.500 1.200" />
      <path d="M0 8.200h10" stroke="#e02020" strokeWidth="3" strokeDasharray="2.500 1.200" />
      <path d="M13.500 2v12M11.500 4.500l2-2.500 2 2.500M11.500 11.500l2 2.500 2-2.500" fill="none" stroke="#111" strokeWidth="1.500" />
    </>
  ),
  swapK: (
    <>
      <path d="M0 5.500h10M0 10.500h10" stroke="#111" strokeWidth="3" strokeDasharray="2.500 1.200" />
      <path d="M3.700 4h2.500v3H3.700z" fill="#e02020" />
      <path d="M13.500 2v12M11.500 4.500l2-2.500 2 2.500M11.500 11.500l2 2.500 2-2.500" fill="none" stroke="#111" strokeWidth="1.500" />
    </>
  ),
};

const serifGlyph = (body, props = {}) => (
  <text x="8" y="13" textAnchor="middle" fontFamily="Liberation Serif, serif" fontSize="14" fill="#777984" {...props}>
    {body}
  </text>
);
Object.assign(art, {
  bold: serifGlyph("B", { fontWeight: 700, fontSize: 15, fill: "#111" }),
  italic: serifGlyph("I", { fontWeight: 700, fontStyle: "italic", fontSize: 15, fill: "#111" }),
  underline: serifGlyph("U", { fontWeight: 700, textDecoration: "underline", fontSize: 13, fill: "#111" }),
  sup: serifGlyph("x²", { fontSize: 12, fontWeight: 700 }),
  sub: serifGlyph("x₂", { fontSize: 12, fontWeight: 700 }),
  supsub: (
    <>
      <text x="1" y="12" fontFamily="Liberation Serif, serif" fontSize="12" fontWeight="700" fill="#777984">x</text>
      <text x="8" y="7" fontFamily="Liberation Serif, serif" fontSize="7" fill="#777984">2</text>
      <text x="8" y="14" fontFamily="Liberation Serif, serif" fontSize="7" fill="#777984">1</text>
    </>
  ),
  greek: serifGlyph("αβ", { y: 12, fontWeight: 700, fontSize: 13 }),
  bigger: (
    <>
      {serifGlyph("A", { x: 7, y: 14, fontSize: 18 })}
      <path d="M12 4l2-3 2 3z" fill="#777984" />
    </>
  ),
  smaller: (
    <>
      {serifGlyph("A", { x: 6, fontSize: 12 })}
      <path d="M11 1h4l-2 3z" fill="#777984" />
    </>
  ),
  fontColor: (
    <>
      {serifGlyph("A", { y: 11, fontSize: 14, fontWeight: 700, fill: "#1c2a7c" })}
      <path d="M0 12h16v3H0z" fill="#000" />
    </>
  ),
});

const Icon = ({ name }) => (
  <svg width="18" height="18" viewBox="0 0 16 16" overflow="visible" aria-hidden="true">
    {art[name]}
  </svg>
);

/* Toolbar entries: a name, "|" for a separator, a trailing "+" for a fly-out mark. */
const Items = ({ list, markWidth = 25 }) =>
  list.split(" ").map((entry, i) => {
    if (entry === "|") return <Separator key={i} />;
    const mark = entry.endsWith("+");
    const name = mark ? entry.slice(0, -1) : entry;
    return (
      <ToolButton key={i} aria-label={name} $mark={mark} $w={mark ? markWidth : 22}>
        <Icon name={name} />
      </ToolButton>
    );
  });

const More = ({ gap }) => (
  <Overflow aria-label="More buttons" $gap={gap}>
    <svg width="7" height="8" viewBox="0 0 7 8" aria-hidden="true">
      <path d="M1 1h5" stroke="#111" />
      <path d="M0 4h7L3.500 8z" fill="#111" />
    </svg>
  </Overflow>
);

const wedges = [
  { name: "India", color: "#000000", on: false },
  { name: "Pak", color: "#ff1a00", on: true },
  { name: "USA", color: "#00d800", on: false },
  { name: "UK", color: "#0010ff", on: true },
  { name: "UAE", color: "#00e5ff", on: false },
];

const labels = [
  ["USA", "35", 382, 245],
  ["Pak", "15", 150, 326],
  ["UK", "22", 671, 316],
  ["UAE", "7", 602, 452],
  ["India", "50", 359, 519],
];

const PieChart = () => (
  <svg viewBox="106 148 652 482" role="img" aria-label="3D pie chart">
    <defs>
      <linearGradient id="top" gradientUnits="userSpaceOnUse" x1="0" y1="367" x2="0" y2="459">
        <stop offset="0" stopColor="#0c0c0c" />
        <stop offset="0.500" stopColor="#505050" />
        <stop offset="1" stopColor="#808080" />
      </linearGradient>
      <linearGradient id="side" gradientUnits="userSpaceOnUse" x1="0" y1="379" x2="0" y2="490">
        <stop offset="0" stopColor="#151515" />
        <stop offset="0.500" stopColor="#606060" />
        <stop offset="1" stopColor="#808080" />
      </linearGradient>
      <linearGradient id="key" x1="0" y1="0" x2="0" y2="1">
        <stop offset="0" stopColor="#222" />
        <stop offset="1" stopColor="#808080" />
      </linearGradient>
    </defs>
    <g stroke="#061806" strokeLinejoin="round">
      <path d="M292 315V361L432 413L545 344V298L432 367z" fill="#00d800" />
      <path d="M432 367L292 315A168.500 93 0 0 1 545 298z" fill="#00d800" />
    </g>
    <g stroke="#5c0800" strokeLinejoin="round">
      <path d="M209 358V406A168.500 92.500 0 0 0 210 418L378 406V360z" fill="#ff1a00" />
      <path d="M378 360L238 307A168.500 92.500 0 0 0 210 371z" fill="#ff1a00" />
    </g>
    <g stroke="#00043c" strokeLinejoin="round">
      <path d="M485 358V404L651 425A168.500 92.500 0 0 0 655 404V358z" fill="#0010ff" />
      <path d="M485 358L599 289A168.500 92.500 0 0 1 651 378z" fill="#0010ff" />
      <path d="M651 378V425" />
    </g>
    <g stroke="#0a2428" strokeLinejoin="round">
      <path d="M432 367L597 388A168.500 93 0 0 1 575 416z" fill="#00e5ff" />
      <path d="M597 388V434A168.500 93 0 0 1 575 464V416A168.500 93 0 0 0 597 388z" fill="#00e5ff" />
    </g>
    <g stroke="#0a0a0a" strokeLinejoin="round">
      <path d="M264 379V424A168.500 92 0 0 0 575 463V416A168.500 92 0 0 1 264 379z" fill="url(#side)" />
      <path d="M432 367L264 379A168.500 92 0 0 0 575 416z" fill="url(#top)" />
    </g>
    <g fontFamily="Liberation Sans, Arial, sans-serif" fontSize="24" fill="#000">
      {labels.map(([name, value, x, y]) => (
        <React.Fragment key={name}>
          <text x={x} y={y}>{name}</text>
          <text x={x} y={y + 29}>{value}</text>
        </React.Fragment>
      ))}
      {wedges.map((w, i) => (
        <React.Fragment key={w.name}>
          <rect x="644.500" y={150.5 + i * 29} width="53" height="26" fill={i ? w.color : "url(#key)"} stroke="#111" />
          <text x="703" y={171 + i * 29}>{w.name}</text>
        </React.Fragment>
      ))}
    </g>
  </svg>
);

const TwoLineField = ({ first, second, value, textWidth, inset, align, gap, inputWidth, indent, h }) => (
  <Field $gap={gap} $indent={indent} $h={h}>
    <FieldText $w={textWidth}>
      {first}
      <Second $inset={inset} $align={align}>{second}</Second>
    </FieldText>
    <NumberInput $w={inputWidth} defaultValue={value} />
  </Field>
);

const menus = ["File", "Edit", "View", "Graph", "Data", "Analysis", "Gadgets", "Tools", "Format", "Window", "Help"];
const drawTools = "zoomIn zoomOut reader target+ compress region+ maskTool+ dots text arrow+ line+ rect+ hand equation+ graphPage+ handGrid";

export default function App() {
  return (
    <Shell>
      <GlobalStyle />
      <TitleBar>
        <svg width="14" height="20" viewBox="0 0 14 20" aria-hidden="true">
          <path d="M6 3.500h7.500v10H6z" fill="#fff" stroke="#2a3a8c" />
          <circle cx="6" cy="11.500" r="6.500" fill="#e2604c" stroke="#a83020" />
          <path d="M1 9c3 0 3 4 5 4s2-5 5-6" fill="none" stroke="#fff" strokeWidth="1.500" />
        </svg>
        <TitleText>OriginPro 9 64-bit - C:\Users\window 10\Documents\OriginLab\90\User Files\UNTITLED * - /Folder1/ - [Graph1]</TitleText>
        <MinimiseButton aria-label="Minimise">
          <svg width="10" height="6" aria-hidden="true"><path d="M0 2.500h10" stroke="#888" /></svg>
        </MinimiseButton>
      </TitleBar>
      <MenuBar>
        <Grip $narrow />
        <svg width="16" height="16" viewBox="0 0 16 16" aria-hidden="true">
          <path d="M2 2h14v14H2z" fill="#5a1414" />
          <path d="M.5.500h13v13H.5z" fill="#f4f4f4" stroke="#888" />
          <path d="M2 3h10v8H2z" fill="#26a9d6" />
          <path d="M4 3v8M7 5h4M6 8h5" stroke="#123a7c" />
        </svg>
        <MenuList>
          {menus.map((m) => <MenuItem key={m}>{m}</MenuItem>)}
        </MenuList>
      </MenuBar>
      <ToolRow>
        <Bar>
          <Grip $narrow />
          <Items list="newDoc newFolder newBook newExcel newGraph newMatrix newFn+ newLayout newNotes newScript | open openTpl openXl save saveTpl | wizard ascii asciiMulti | batch runner |" />
          <Combo $w={57} aria-label="Zoom">
            <ComboText>100%</ComboText>
            <Caret />
          </Combo>
          <Items list="| print slides pinkBox film | brushWin panes | tree | finder results command gear | addCol" />
          <More gap={1} />
        </Bar>
        <Bar>
          <Grip />
          <Items list="sumCol sumRow sort | setCol setRow | barsUp barsMix barsAxis funnel funnelOff funnelRe" />
          <More gap={2} />
        </Bar>
        <Bar>
          <Grip />
          <Items list="axX axY axZ axErr axLbl" />
        </Bar>
      </ToolRow>
      <ToolRow>
        <Bar>
          <Grip $narrow />
          <Items list="cut copy paste" />
          <More />
        </Bar>
        <Bar>
          <Grip />
          <Combo $w={125} $dim aria-label="Font">
            <svg width="15" height="14" viewBox="0 0 15 14" aria-hidden="true">
              <path d="M1 4V2.500h7V4M4.500 2.500v8M3 10.500h3" fill="none" stroke="#333" strokeWidth="1.500" />
              <path d="M6 6V4.500h8V6M10 4.500v8M8 12.500h4" fill="none" stroke="#333" strokeWidth="2" />
            </svg>
            <ComboText>Default: Arial</ComboText>
            <Caret $color="#666" />
          </Combo>
          <Combo $w={57} $dim aria-label="Font size">
            <ComboText>0</ComboText>
            <Caret $color="#666" />
          </Combo>
          <Items markWidth={26} list="bold italic underline sup sub supsub greek bigger smaller alignL+ pattern+ fontColor" />
          <Caret $space={3} />
          <More gap={2} />
        </Bar>
        <Bar>
          <Grip />
          <Items list="bucket" />
          <Caret $space={4} />
          <Items list="palette" />
          <Caret $space={4} $color="#777" />
          <Items list="pen" />
          <Caret $space={4} />
          <Items list="bulb" />
          <Combo $w={56} aria-label="Line style">
            <svg width="34" height="4" aria-hidden="true"><path d="M0 2.500h34" stroke="#111" /></svg>
            <Caret $space={4} />
          </Combo>
          <Combo $w={60} $dim aria-label="Line width">
            <ComboText>0.5</ComboText>
            <Caret />
          </Combo>
        </Bar>
      </ToolRow>
      <Workspace>
        <SideTabs>
          <SideTab $h={137} $pad={6}>Project Explorer (1)</SideTab>
          <SideTab $h={99} $pad={13}>Quick Help</SideTab>
          <SideTab $h={120} $pad={13}>Messages Log</SideTab>
        </SideTabs>
        <Tools>
          <VGrip />
          <ToolButton $active aria-label="Pointer"><Icon name="pointer" /></ToolButton>
          <Items list={drawTools} />
          <ToolsEnd aria-label="More tools">
            <svg width="8" height="7" aria-hidden="true">
              <path d="M1.500 0v7" stroke="#111" />
              <path d="M4 0v7l4-3.500z" fill="#111" />
            </svg>
          </ToolsEnd>
        </Tools>
        <Desktop>
          <GraphWindow>
            <LayerTag>1</LayerTag>
            <Frame><PieChart /></Frame>
          </GraphWindow>
        </Desktop>
      </Workspace>
      <BottomRow>
        <Bar>
          <Grip />
          <Items markWidth={26} list="line+ scatter+ lineSym+ column+ multiLine+ box+ area+ radar+ candle+ templates" />
          <More gap={1} />
        </Bar>
        <Bar>
          <Grip />
          <Items markWidth={26} list="cubeBars+ | cube+ cubeDots+ mesh+ contour stack" />
          <More gap={1} />
        </Bar>
        <Bar>
          <Grip />
          <Items list="cat catX | mask swapG swapR | swapK" />
          <More gap={2} />
        </Bar>
      </BottomRow>
      <StatusBar>
        <StatusCell $w={47}>AU : ON</StatusCell>
        <StatusCell $w={138}>Dark Colors &amp; Light Grids</StatusCell>
        <StatusCell $w={220}>1:[Book1]Sheet1!Col("No. of students")[1:5]</StatusCell>
        <StatusCell $w={15}>1:</StatusCell>
      </StatusBar>

      <Dialog role="dialog" aria-label="Plot Details">
        <DialogTitle>
          <svg width="15" height="13" aria-hidden="true">
            <path d="M.5.500h14v12H.5z" fill="#f4f4f4" stroke="#888" />
            <path d="M2 2h6v9H2z" fill="#2c7a78" />
            <path d="M10.500 2v3M12.500 2v3" stroke="#666" />
          </svg>
          <DialogName>Plot Details - Plot Properties</DialogName>
          <CaptionButton aria-label="Help">?</CaptionButton>
          <CaptionButton aria-label="Close">
            <svg width="11" height="11" aria-hidden="true"><path d="M.5.500l10 10M10.500.500l-10 10" stroke="#222" strokeWidth="1.200" /></svg>
          </CaptionButton>
        </DialogTitle>
        <TabList>
          <Tab $w={44}>Pattern</Tab>
          <Tab $w={79} $on>Pie Geometry</Tab>
          <Tab $w={40}>Labels</Tab>
          <Tab $w={90}>Numeric Formats</Tab>
        </TabList>
        <TabPage>
          <Column>
            <Group $w={155} $h={88}>
              <Legend>3D View</Legend>
              <TwoLineField first="View Angle (deg)" second="(90 = 2D View)" value="33" textWidth={80} />
              <TwoLineField first="Thickness" second="(% of radius)" value="33" textWidth={80} inset={11} />
            </Group>
            <Group $w={155} $h={58}>
              <Legend>Rotation</Legend>
              <Field $h={20} $gap={1} $indent={0}>
                <FieldText $w={109}>Starting Azimuth (deg)</FieldText>
                <NumberInput $w={30} defaultValue="33" />
              </Field>
              <CheckLabel>
                <CheckBox type="checkbox" />
                Counter Clockwise
              </CheckLabel>
            </Group>
            <Group $w={155} $h={82}>
              <Legend>Radius/Center</Legend>
              <TwoLineField h={32} first="Rescale Radius" second="(% of frame)" value="70" textWidth={80} gap={16} />
              <TwoLineField h={32} first="Horizontal Offset" second="(% of frame)" value="0" textWidth={80} gap={16} />
            </Group>
          </Column>
          <Group $w={152} $h={236}>
            <Legend>Pie Sections</Legend>
            <ListCaption>Explode Wedge:</ListCaption>
            <WedgeList>
              {wedges.map((w) => (
                <WedgeRow key={w.name}>
                  <CheckBox type="checkbox" defaultChecked={w.on} />
                  <Swatch $color={w.color} />
                  {w.name}
                </WedgeRow>
              ))}
            </WedgeList>
            <TwoLineField first="Displacement" second="(% of radius)" value="33" textWidth={68} align="left" gap={4} inputWidth={30} indent={14} />
          </Group>
        </TabPage>
        <DialogButtons>
          <PushButton $w={27}>&lt;&lt;</PushButton>
          <PushButton $w={72}>Workbook</PushButton>
          <PushButton>OK</PushButton>
          <PushButton>Cancel</PushButton>
          <PushButton disabled>Apply</PushButton>
        </DialogButtons>
        <Cursor width="14" height="20" viewBox="0 0 14 20" aria-hidden="true">
          <path d="M1 1v15l3.500-3.500L7 18l3-1.500L7.500 11.500h5z" fill="#fff" stroke="#222" />
        </Cursor>
      </Dialog>
    </Shell>
  );
}
